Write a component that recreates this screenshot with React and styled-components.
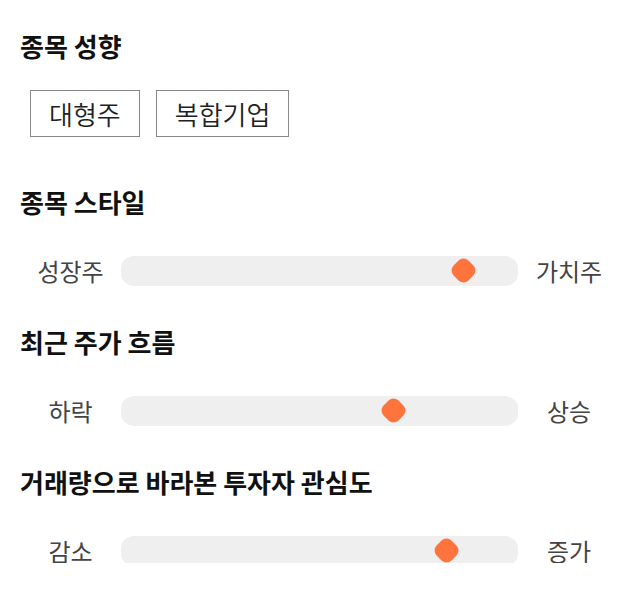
import React from 'react'
import styled, { createGlobalStyle } from 'styled-components'

const GlobalStyle = createGlobalStyle`
  body {
    margin: 0;
    background: #fff;
    font-family: "Noto Sans CJK KR", "Noto Sans", sans-serif;
  }
`

const Page = styled.div`
  padding: 30px 20px 0 20px;
  width: 600px;
`

const Section = styled.section`
  margin-bottom: ${(p) => p.gap}px;
`

const Title = styled.h2`
  margin: 0;
  font-size: 26px;
  line-height: 32px;
  font-weight: 700;
  color: #111;
`

const Tags = styled.div`
  display: flex;
  gap: 16px;
  margin: 28px 0 0 10px;
`

const Tag = styled.div`
  height: 47px;
  box-sizing: border-box;
  padding: 0 18px;
  display: flex;
  align-items: center;
  border: 1px solid #888;
  font-size: 26px;
  font-weight: 350;
  color: #222;
`

const Row = styled.div`
  display: grid;
  grid-template-columns: 101px 397px 102px;
  align-items: center;
  margin-top: 35px;
  height: 30px;
`

const Label = styled.span`
  text-align: center;
  font-size: 24px;
  color: #444;
`

const Track = styled.div`
  position: relative;
  height: 30px;
  background: #efefef;
  border-radius: 14px / 12px;
`

const Thumb = styled.div`
  position: absolute;
  top: 4.5px;
  width: 21px;
  height: 21px;
  margin-left: -10.5px;
  background: #ff743d;
  border-radius: 7px;
  transform: rotate(45deg);
`

const Slider = ({ from, to, value }) => (
  <Row>
    <Label>{from}</Label>
    <Track>
      <Thumb style={{ left: `calc(14px + ${value} * (100% - 28px))` }} />
    </Track>
    <Label>{to}</Label>
  </Row>
)

export default function App() {
  return (
    <>
      <GlobalStyle />
      <Page>
        <Section gap={49}>
          <Title>종목 성향</Title>
          <Tags>
            <Tag>대형주</Tag>
            <Tag>복합기업</Tag>
          </Tags>
        </Section>
        <Section gap={43}>
          <Title>종목 스타일</Title>
          <Slider from="성장주" to="가치주" value={0.89} />
        </Section>
        <Section gap={43}>
          <Title>최근 주가 흐름</Title>
          <Slider from="하락" to="상승" value={0.7} />
        </Section>
        <Section gap={0}>
          <Title>거래량으로 바라본 투자자 관심도</Title>
          <Slider from="감소" to="증가" value={0.843} />
        </Section>
      </Page>
    </>
  )
}
